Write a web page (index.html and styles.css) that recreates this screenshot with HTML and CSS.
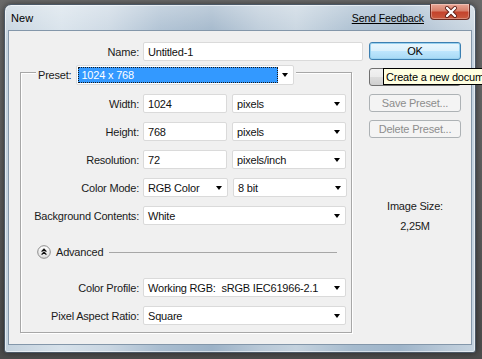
FILE: index.html
```html
<!DOCTYPE html>
<html>
<head>
<meta charset="utf-8">
<link rel="stylesheet" href="styles.css">
</head>
<body>
<div class="window">
  <div class="titlebar">
    <span class="title">New</span>
    <span class="feedback">Send Feedback</span>
    <div class="close">
      <svg width="40" height="16" viewBox="0 0 40 16">
        <path d="M16 4 L24 12 M24 4 L16 12" stroke="#5a1a12" stroke-width="4" stroke-linecap="round"/>
        <path d="M16 4 L24 12 M24 4 L16 12" stroke="#ffffff" stroke-width="2.4" stroke-linecap="round"/>
      </svg>
    </div>
  </div>
  <div class="client">
    <div class="main">
      <div class="row name-row">
        <span class="lbl">Name:</span>
        <div class="field name-field">Untitled-1</div>
      </div>
      <div class="group">
        <div class="preset-row">
          <span class="preset-lbl">Preset:</span>
          <div class="field select preset"><span class="sel-text">1024 x 768</span><span class="arrow"></span></div>
        </div>
        <div class="row grow">
          <span class="lbl">Width:</span>
          <div class="pair">
            <div class="field num">1024</div>
            <div class="field select unit"><span>pixels</span><span class="arrow"></span></div>
          </div>
        </div>
        <div class="row grow">
          <span class="lbl">Height:</span>
          <div class="pair">
            <div class="field num">768</div>
            <div class="field select unit"><span>pixels</span><span class="arrow"></span></div>
          </div>
        </div>
        <div class="row grow">
          <span class="lbl">Resolution:</span>
          <div class="pair">
            <div class="field num">72</div>
            <div class="field select unit"><span>pixels/inch</span><span class="arrow"></span></div>
          </div>
        </div>
        <div class="row grow">
          <span class="lbl">Color Mode:</span>
          <div class="pair">
            <div class="field select mode"><span>RGB Color</span><span class="arrow"></span></div>
            <div class="field select unit"><span>8 bit</span><span class="arrow"></span></div>
          </div>
        </div>
        <div class="row grow">
          <span class="lbl">Background Contents:</span>
          <div class="field select wide"><span>White</span><span class="arrow"></span></div>
        </div>
        <div class="advanced">
          <svg class="adv-icon" width="14" height="14" viewBox="0 0 14 14">
            <defs>
              <linearGradient id="ag" x1="0" y1="0" x2="0" y2="1">
                <stop offset="0" stop-color="#ffffff"/>
                <stop offset="1" stop-color="#dcdcdc"/>
              </linearGradient>
            </defs>
            <circle cx="7" cy="7" r="6.3" fill="url(#ag)" stroke="#8a8a8a" stroke-width="1"/>
            <path d="M4.6 6.6 L7 4.2 L9.4 6.6 M4.6 9.6 L7 7.2 L9.4 9.6" fill="none" stroke="#111" stroke-width="1.3"/>
          </svg>
          <span class="adv-text">Advanced</span>
          <span class="adv-line"></span>
        </div>
        <div class="row grow first-adv">
          <span class="lbl">Color Profile:</span>
          <div class="field select wide"><span>Working RGB:&nbsp; sRGB IEC61966-2.1</span><span class="arrow"></span></div>
        </div>
        <div class="row grow">
          <span class="lbl">Pixel Aspect Ratio:</span>
          <div class="field select wide"><span>Square</span><span class="arrow"></span></div>
        </div>
      </div>
    </div>
    <div class="side">
      <div class="btn default">OK</div>
      <div class="btn"></div>
      <div class="btn disabled">Save Preset...</div>
      <div class="btn disabled">Delete Preset...</div>
      <div class="size-lbl">Image Size:</div>
      <div class="size-val">2,25M</div>
      <div class="tooltip"><span class="tip-text">Create a new document</span></div>
    </div>
  </div>
</div>
</body>
</html>
```

FILE: styles.css
```css
html, body {
  margin: 0;
  padding: 0;
}
body {
  width: 482px;
  height: 359px;
  overflow: hidden;
  background: linear-gradient(180deg, #6a6a6a 0%, #5a5a5a 60%, #4c4c4c 100%);
  font-family: "Liberation Sans", Arial, sans-serif;
  font-size: 11px;
  color: #1a1a1a;
}
.window {
  box-sizing: border-box;
  margin: 4px 0 0 4px;
  width: 472px;
  height: 349px;
  border: 1px solid #4b5866;
  border-radius: 7px 7px 3px 3px;
  padding: 0 4px 8px 4px;
  display: flex;
  flex-direction: column;
  background:
    linear-gradient(180deg, rgba(255,255,255,0.35) 0px, rgba(255,255,255,0.1) 26px, rgba(255,255,255,0) 40px),
    linear-gradient(90deg, #c4d2de 0%, #d6e1ea 12%, #c9d6e2 22%, #a9bdd0 33%, #9cb2c7 44%, #b8c8d7 54%, #c4d2de 62%, #a6bbce 74%, #9fb5ca 84%, #b9c9d8 94%, #c5d3df 100%);
  box-shadow: inset 0 0 0 1px rgba(255,255,255,0.55), 0 0 6px rgba(0,0,0,0.5);
}
.titlebar {
  height: 26px;
  display: flex;
  align-items: center;
  padding-left: 2px;
}
.title {
  font-size: 11px;
  color: #000;
  letter-spacing: 0.1px;
  margin-top: -1px;
}
.feedback {
  margin-left: auto;
  font-size: 10.5px;
  color: #000;
  text-decoration: underline;
  letter-spacing: -0.1px;
  margin-top: -1px;
}
.close {
  align-self: flex-start;
  width: 40px;
  height: 16px;
  margin-left: 6px;
  margin-right: 1px;
  margin-top: -1px;
  box-sizing: border-box;
  border: 1px solid #6b2a20;
  border-top: none;
  border-radius: 0 0 4px 4px;
  background: linear-gradient(180deg, #e9a797 0%, #d7806b 45%, #c4432c 55%, #c95a3f 100%);
  box-shadow: inset 0 0 0 1px rgba(255,255,255,0.3);
}
.close svg { display: block; }
.client {
  flex: 1;
  background: #f0f0f0;
  box-shadow: 0 0 0 1px #8497aa;
  display: flex;
  padding: 11px 10px 0 11px;
  letter-spacing: -0.2px;
}
.main {
  width: 343px;
  display: flex;
  flex-direction: column;
}
.row {
  display: grid;
  grid-template-columns: 119px 1fr;
  column-gap: 4px;
  align-items: center;
  height: 19px;
}
.lbl {
  text-align: right;
  white-space: nowrap;
  color: #1a1a1a;
}
.field {
  box-sizing: border-box;
  height: 19px;
  background: #fff;
  border: 1px solid #dadada;
  border-radius: 2px;
  padding-left: 4px;
  display: flex;
  align-items: center;
  color: #111;
  white-space: nowrap;
  overflow: hidden;
}
.name-field { width: 220px; }
.group {
  box-sizing: border-box;
  width: 332px;
  margin-top: 11px;
  border: 1px solid #a7a7a7;
  box-shadow: inset 1px 1px 0 #fff, 1px 1px 0 #fff;
  display: flex;
  flex-direction: column;
  padding-bottom: 7px;
}
.group .row {
  grid-template-columns: 118px 1fr;
}
.grow { margin-top: 9px; }
.preset-row {
  align-self: flex-start;
  display: flex;
  align-items: center;
  margin-top: -8px;
  margin-left: 15px;
  padding: 0 2px 0 2px;
  background: #f0f0f0;
  height: 20px;
}
.preset-lbl { margin-right: 5px; }
.preset {
  width: 218px;
  height: 20px;
  padding: 1px;
}
.sel-text {
  box-sizing: border-box;
  height: 100%;
  width: 200px;
  background: #3399ff;
  color: #fff;
  outline: 1px dotted #1a1a1a;
  outline-offset: -1px;
  padding-left: 3px;
  display: flex;
  align-items: center;
}
.preset .arrow { margin-right: 4px; }
.pair {
  display: flex;
  gap: 5px;
}
.num { width: 84px; }
.unit { width: 114px; }
.mode { width: 85px; }
.wide { width: 203px; }
.arrow {
  margin-left: auto;
  margin-right: 5px;
  width: 0;
  height: 0;
  border-left: 3px solid transparent;
  border-right: 3px solid transparent;
  border-top: 4px solid #000;
  flex-shrink: 0;
}
.grow:first-of-type { margin-top: 10px; }
.advanced {
  display: flex;
  align-items: center;
  height: 14px;
  margin-top: 20px;
  padding-left: 16px;
  padding-right: 14px;
}
.adv-icon { display: block; flex-shrink: 0; }
.adv-text { margin-left: 5px; color: #1a1a1a; }
.adv-line {
  flex: 1;
  height: 1px;
  background: #a7a7a7;
  margin-left: 6px;
}
.first-adv { margin-top: 19px; }
.side {
  position: relative;
  width: 92px;
  margin-left: 6px;
  display: flex;
  flex-direction: column;
  gap: 8px;
}
.btn {
  box-sizing: border-box;
  height: 18px;
  border: 1px solid #707070;
  border-radius: 3px;
  background: linear-gradient(180deg, #f2f2f2 0%, #ebebeb 50%, #dddddd 51%, #cfcfcf 100%);
  display: flex;
  align-items: center;
  justify-content: center;
  color: #000;
}
.btn.default {
  border-color: #3c7fb1;
  background: linear-gradient(180deg, #eaf6fd 0%, #d9f0fc 50%, #bee6fd 51%, #a7d9f5 100%);
  box-shadow: inset 0 0 0 1px #98d1ef;
}
.btn.disabled {
  border-color: #adb2b5;
  background: #f4f4f4;
  color: #8d8d8d;
}
.size-lbl {
  margin-top: 54px;
  text-align: center;
  line-height: 13px;
}
.size-val {
  text-align: center;
  line-height: 13px;
  margin-top: -1px;
}
.tooltip {
  position: absolute;
  left: 14px;
  top: 26px;
  box-sizing: border-box;
  height: 17px;
  width: 99px;
  background: #ffffe1;
  border: 1px solid #000;
  border-right: none;
  padding-left: 2px;
  display: flex;
  align-items: center;
  white-space: nowrap;
  overflow: hidden;
  color: #000;
}
.tip-text { flex-shrink: 0; }
```
